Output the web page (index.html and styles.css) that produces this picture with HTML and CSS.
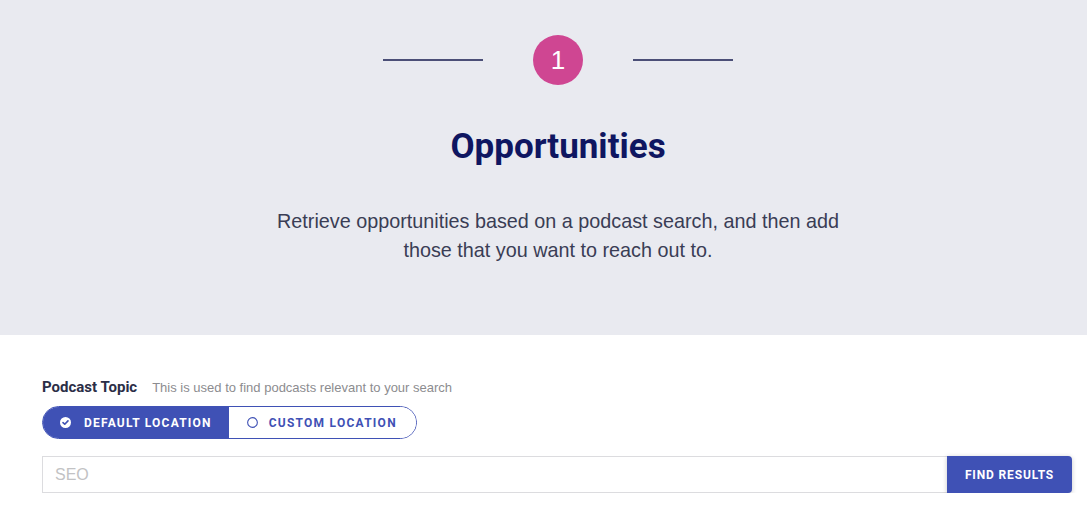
FILE: index.html
```html
<!DOCTYPE html>
<html>
<head>
<meta charset="utf-8">
<link rel="stylesheet" href="styles.css">
</head>
<body>
<header class="hero">
  <div class="steps">
    <span class="rule"></span>
    <span class="step-num">1</span>
    <span class="rule"></span>
  </div>
  <h1 class="title">Opportunities</h1>
  <p class="lead">Retrieve opportunities based on a podcast search, and then add<br>those that you want to reach out to.</p>
</header>
<main class="form">
  <div class="label-row">
    <span class="label">Podcast Topic</span>
    <span class="hint">This is used to find podcasts relevant to your search</span>
  </div>
  <div class="toggle">
    <button class="opt active">
      <svg width="11" height="11" viewBox="0 0 12 12"><circle cx="6" cy="6" r="6" fill="#fff"/><path d="M3.3 6.1 L5.2 7.9 L8.7 4.3" fill="none" stroke="#3f51b5" stroke-width="1.8" stroke-linecap="round" stroke-linejoin="round"/></svg>
      DEFAULT LOCATION
    </button>
    <button class="opt">
      <svg width="11" height="11" viewBox="0 0 12 12"><circle cx="6" cy="6" r="5.3" fill="none" stroke="#3f51b5" stroke-width="1.2"/></svg>
      CUSTOM LOCATION
    </button>
  </div>
  <div class="search">
    <input class="field" type="text" placeholder="SEO">
    <button class="find">FIND RESULTS</button>
  </div>
</main>
</body>
</html>
```

FILE: styles.css
```css
html, body { margin: 0; padding: 0; background: #fff; }
body { font-family: Roboto, "Liberation Sans", sans-serif; }

.hero {
  background: #e9eaf0;
  height: 335px;
  box-sizing: border-box;
  padding: 35px 0 0 29px;
  text-align: center;
}
.steps {
  display: flex;
  justify-content: center;
  align-items: center;
  gap: 50px;
}
.rule {
  width: 100px;
  height: 2px;
  background: #4b4f77;
}
.step-num {
  width: 50px;
  height: 50px;
  border-radius: 50%;
  background: #cf4692;
  color: #fff;
  font-family: "Liberation Sans", sans-serif;
  font-size: 26px;
  line-height: 50px;
  text-align: center;
}
.title {
  margin: 42px 0 0;
  font-family: Roboto, sans-serif;
  font-weight: 700;
  font-size: 35px;
  line-height: 40px;
  color: #0f1661;
}
.lead {
  margin: 40px 0 0;
  font-family: "Liberation Sans", sans-serif;
  font-size: 19.8px;
  line-height: 29px;
  color: #3a3d55;
}

.form {
  padding: 43px 15px 0 42px;
}
.label-row {
  display: flex;
  align-items: baseline;
  gap: 15px;
  height: 19px;
}
.label {
  font-family: Roboto, sans-serif;
  font-weight: 700;
  font-size: 15px;
  color: #2b2e47;
}
.hint {
  font-family: "Liberation Sans", sans-serif;
  font-size: 13px;
  color: #8c8c8f;
}
.toggle {
  display: inline-flex;
  margin-top: 9px;
  border: 1px solid #3f51b5;
  border-radius: 17px;
  overflow: hidden;
  height: 33px;
  box-sizing: border-box;
}
.opt {
  display: flex;
  align-items: center;
  gap: 11px;
  border: 0;
  margin: 0;
  background: #fff;
  color: #3f51b5;
  font-family: Roboto, sans-serif;
  font-weight: 700;
  font-size: 12px;
  letter-spacing: 1.25px;
  padding: 0 19px 0 18px;
}
.opt.active {
  background: #3f51b5;
  color: #fff;
  gap: 13px;
  letter-spacing: 1.2px;
  padding: 0 17px 0 17px;
}
.search {
  display: flex;
  margin-top: 17px;
  height: 37px;
}
.field {
  flex: 1;
  border: 1px solid #dcdcdf;
  border-right: 0;
  padding: 0 12px;
  font-family: "Liberation Sans", sans-serif;
  font-size: 16px;
  color: #333;
  outline: none;
  margin: 0;
}
.field::placeholder { color: #c2c2c4; }
.find {
  width: 125px;
  border: 0;
  margin: 0;
  background: #3f51b5;
  color: #fff;
  border-radius: 0 4px 4px 0;
  box-shadow: 0 1px 5px rgba(0,0,0,0.22);
  font-family: Roboto, sans-serif;
  font-weight: 700;
  font-size: 12px;
  letter-spacing: 0.85px;
}
```
